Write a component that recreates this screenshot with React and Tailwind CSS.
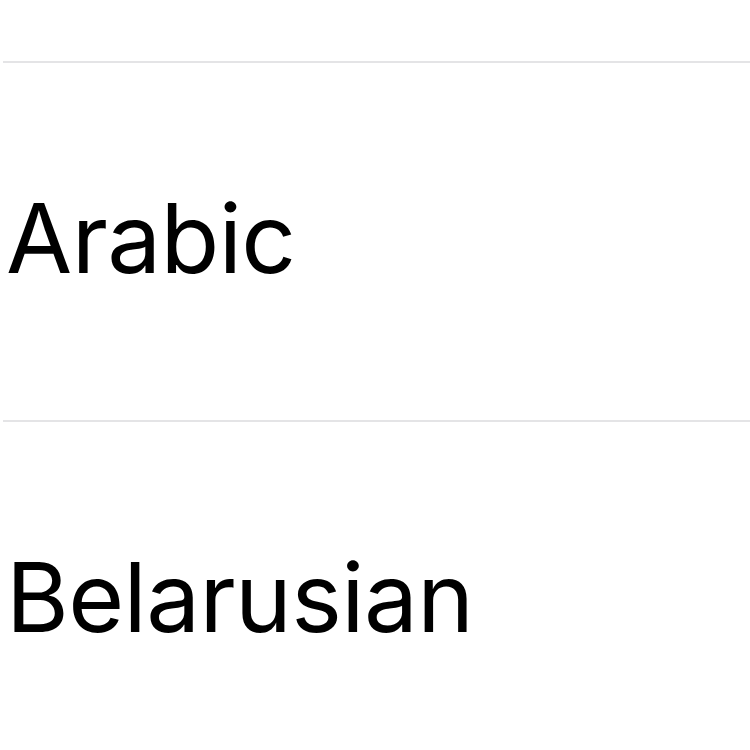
const languages = ['Arabic', 'Belarusian'];

export default function App() {
  return (
    <div className="h-[750px] w-[750px] overflow-hidden bg-white font-['Inter',sans-serif] text-black">
      <div className="h-[61px]" />
      {languages.map((name) => (
        <div key={name} className="h-[359px] border-t-2 border-[#e4e4e6] ml-[3px]">
          <div className="pl-[3px] pt-[127px] text-[96px] leading-none tracking-[-0.6px]">{name}</div>
        </div>
      ))}
    </div>
  );
}
